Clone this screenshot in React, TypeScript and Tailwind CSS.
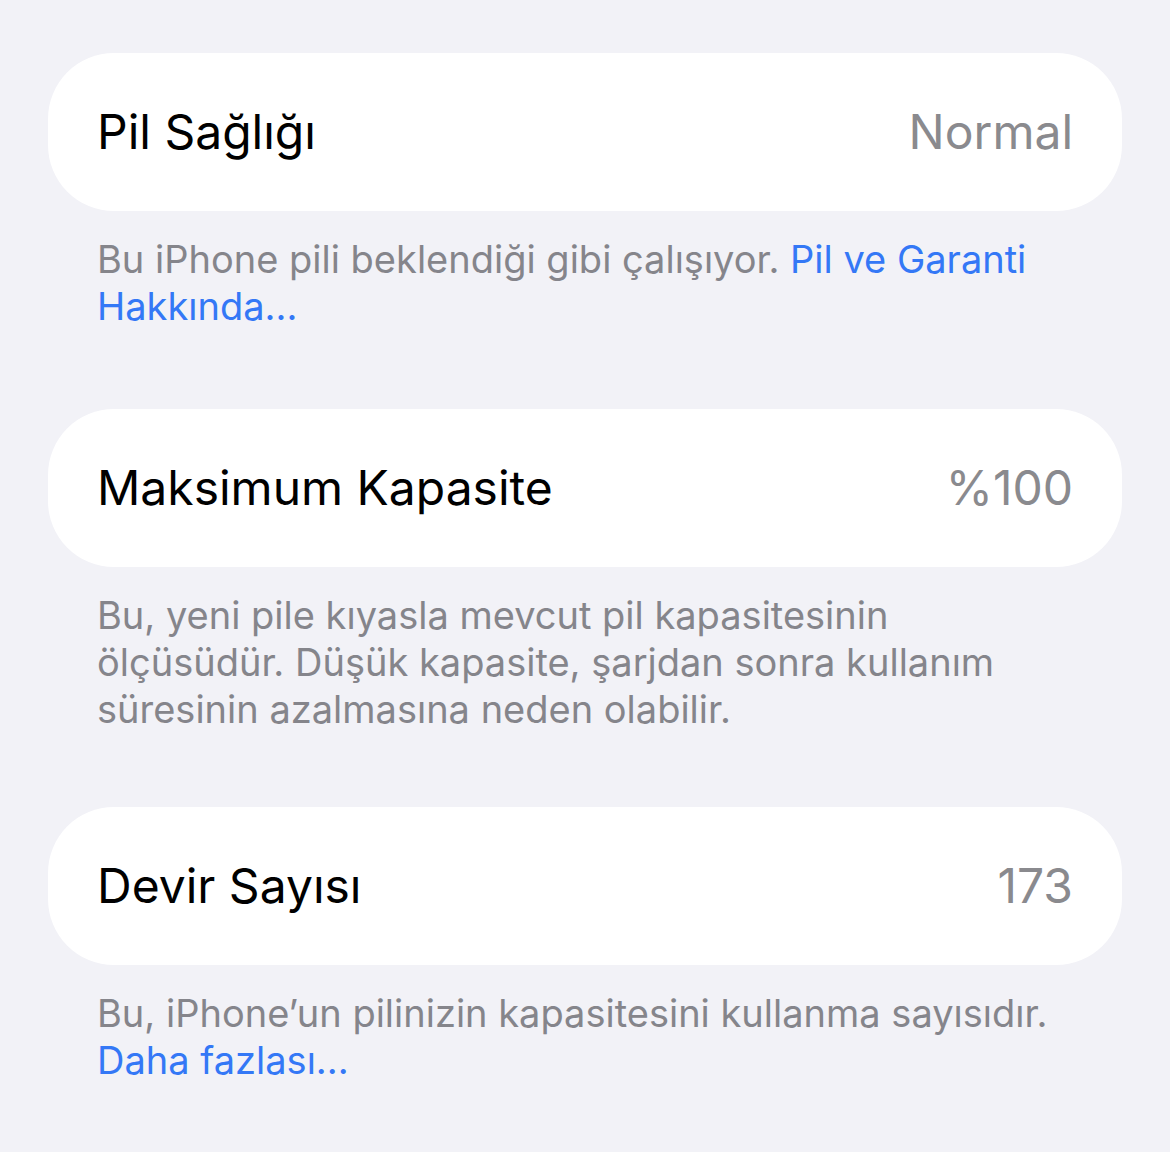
import type { ReactNode } from "react";

interface RowProps {
  title: string;
  value: string;
  footer: ReactNode;
  className?: string;
}

function Row({ title, value, footer, className }: RowProps) {
  return (
    <section className={className}>
      <div className="flex h-[158px] items-center justify-between rounded-[66px] bg-white px-[49px]">
        <span className="text-[48px] leading-none text-black">{title}</span>
        <span className="text-[48px] leading-none text-[#8a8a8e]">{value}</span>
      </div>
      <p className="mt-[25px] px-[49px] text-[38px] leading-[47px] text-[#85858b]">
        {footer}
      </p>
    </section>
  );
}

export default function App() {
  return (
    <div
      className="min-h-[1152px] w-[1170px] bg-[#f2f2f7] px-[48px] pt-[53px]"
      style={{ fontFamily: "Inter, 'Noto Sans', sans-serif" }}
    >
      <Row
        title="Pil Sağlığı"
        value="Normal"
        footer={
          <>
            Bu iPhone pili beklendiği gibi çalışıyor.{" "}
            <span className="text-[#3478f6]">Pil ve Garanti Hakkında...</span>
          </>
        }
      />
      <Row
        className="mt-[79px]"
        title="Maksimum Kapasite"
        value="%100"
        footer="Bu, yeni pile kıyasla mevcut pil kapasitesinin ölçüsüdür. Düşük kapasite, şarjdan sonra kullanım süresinin azalmasına neden olabilir."
      />
      <Row
        className="mt-[74px]"
        title="Devir Sayısı"
        value="173"
        footer={
          <>
            Bu, iPhone’un pilinizin kapasitesini kullanma sayısıdır.{" "}
            <span className="text-[#3478f6]">Daha fazlası...</span>
          </>
        }
      />
    </div>
  );
}
